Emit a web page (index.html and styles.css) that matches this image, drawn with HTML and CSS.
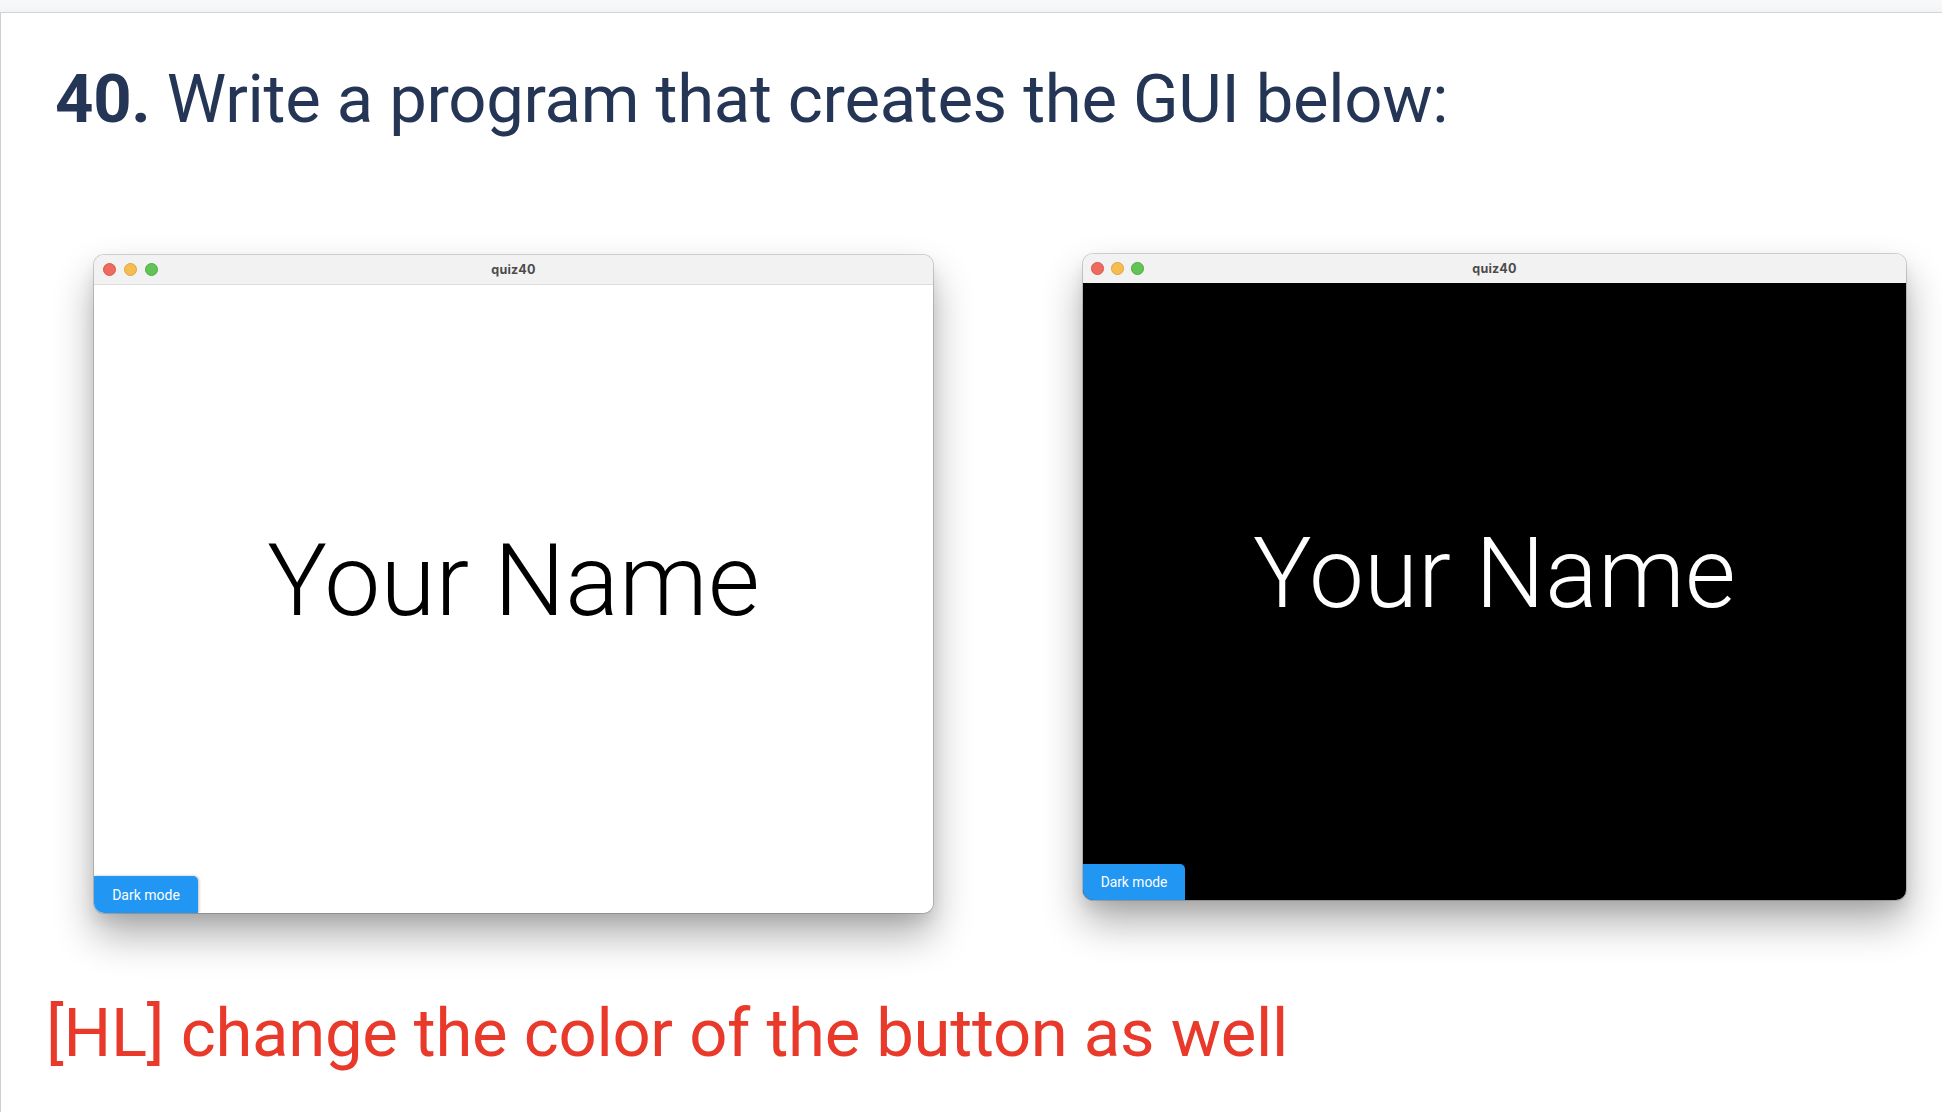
FILE: index.html
```html
<!DOCTYPE html>
<html>
<head>
<meta charset="utf-8">
<link rel="stylesheet" href="styles.css">
</head>
<body>
<div class="topbar"></div>
<main class="page">
  <h1 class="question"><span class="num">40.</span> Write a program that creates the GUI below:</h1>
  <div class="windows">
    <div class="window light">
      <div class="titlebar">
        <div class="lights"><span class="dot red"></span><span class="dot yellow"></span><span class="dot green"></span></div>
        <div class="wtitle">quiz40</div>
      </div>
      <div class="content">
        <div class="stage"><span class="name">Your Name</span></div>
        <div class="btnrow"><button class="btn">Dark mode</button></div>
      </div>
    </div>
    <div class="window dark">
      <div class="titlebar">
        <div class="lights"><span class="dot red"></span><span class="dot yellow"></span><span class="dot green"></span></div>
        <div class="wtitle">quiz40</div>
      </div>
      <div class="content">
        <div class="stage"><span class="name">Your Name</span></div>
        <div class="btnrow"><button class="btn">Dark mode</button></div>
      </div>
    </div>
  </div>
  <p class="note">[HL] change the color of the button as well</p>
</main>
</body>
</html>
```
FILE: styles.css
```css
html, body {
  margin: 0;
  padding: 0;
  background: #ffffff;
}
body {
  font-family: Roboto, "Liberation Sans", sans-serif;
  overflow: hidden;
  height: 1112px;
}
.topbar {
  height: 12px;
  background: linear-gradient(#f8f9fb, #f3f4f6);
  border-bottom: 1px solid #d2d3d5;
}
.page {
  border-left: 1px solid #cfcfcf;
  height: 1099px;
  display: flex;
  flex-direction: column;
  box-sizing: border-box;
}
.question {
  margin: 47px 0 0 54px;
  font-size: 67px;
  font-weight: 400;
  line-height: normal;
  color: #253555;
  letter-spacing: -0.3px;
}
.question .num {
  font-weight: 700;
}
.windows {
  display: flex;
  align-items: flex-start;
  gap: 150px;
  margin: 117px 0 0 93px;
}
.window {
  display: flex;
  flex-direction: column;
  border-radius: 10px;
  overflow: hidden;
  box-shadow: 0 0 0 1px rgba(0,0,0,0.16), 0 22px 40px rgba(0,0,0,0.32), 0 8px 14px rgba(0,0,0,0.08);
}
.window.light {
  width: 839px;
  height: 658px;
}
.window.dark {
  width: 823px;
  height: 646px;
  margin-top: -1px;
}
.titlebar {
  position: relative;
  height: 29px;
  flex: none;
  background: #f2f2f2;
  border-bottom: 1px solid #dedede;
  display: flex;
  align-items: center;
}
.dark .titlebar {
  height: 29px;
  border-bottom: none;
}
.lights {
  display: flex;
  gap: 8px;
  margin-left: 9px;
}
.dark .lights {
  gap: 7.5px;
  margin-left: 8px;
}
.dot {
  width: 13px;
  height: 13px;
  border-radius: 50%;
  box-sizing: border-box;
}
.dark .dot {
  width: 12.6px;
  height: 12.6px;
}
.dot.red { background: #ee6a5f; border: 0.5px solid #d8574d; }
.dot.yellow { background: #f5bd4f; border: 0.5px solid #dea53b; }
.dot.green { background: #61c454; border: 0.5px solid #51a944; }
.wtitle {
  position: absolute;
  left: 0;
  right: 0;
  text-align: center;
  font-family: Inter, "Open Sans", sans-serif;
  font-weight: 700;
  font-size: 12.5px;
  color: #4b4b4b;
  letter-spacing: 0.2px;
}
.content {
  flex: 1;
  display: flex;
  flex-direction: column;
}
.light .content { background: #ffffff; }
.dark .content { background: #000000; }
.stage {
  flex: 1;
  display: flex;
  align-items: center;
  justify-content: center;
}
.name {
  font-weight: 300;
  line-height: 1;
  font-size: 100px;
  letter-spacing: 0.2px;
}
.light .name { color: #000000; }
.dark .name { color: #ffffff; font-size: 98px; }
.btnrow {
  display: flex;
}
.btn {
  border: none;
  margin: 0;
  padding: 0;
  width: 104px;
  height: 37px;
  background: #2196f3;
  color: #ffffff;
  font-family: Roboto, sans-serif;
  font-size: 14px;
  border-radius: 0 5px 0 0;
  box-shadow: 1px 0 3px rgba(0,0,0,0.25);
}
.dark .btn {
  width: 102px;
  height: 36px;
  font-size: 13.8px;
}
.note {
  margin: 81px 0 0 45px;
  font-size: 67px;
  line-height: normal;
  color: #e8392a;
  font-weight: 400;
  letter-spacing: -0.28px;
}
```
